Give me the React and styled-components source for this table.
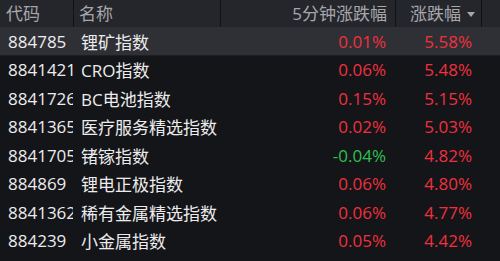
import React from "react";
import styled, { createGlobalStyle } from "styled-components";

const Global = createGlobalStyle`
  html, body { margin: 0; padding: 0; background: #141519; }
  body { font-family: "Open Sans", "Noto Sans CJK SC", sans-serif; }
`;

const Table = styled.div`
  width: 500px;
  height: 261px;
  background: #141519;
  overflow: hidden;
  font-size: 17px;
`;

const cols = "74px 147px 175px 86px 1fr";

const HeaderRow = styled.div`
  display: grid;
  grid-template-columns: ${cols};
  height: 27px;
  background: #25262b;
`;

const HeadCell = styled.div`
  display: flex;
  align-items: center;
  justify-content: ${(p) => (p.$right ? "flex-end" : "flex-start")};
  gap: 6px;
  padding: ${(p) => (p.$right ? `0 ${p.$pr || 8}px 0 0` : `0 0 0 ${p.$pl || 6}px`)};
  border-right: ${(p) => (p.$last ? "none" : "1px solid #111215")};
  color: #a6a7ab;
  line-height: 1;
  white-space: nowrap;
  overflow: hidden;
`;

const Arrow = styled.span`
  width: 0;
  height: 0;
  border-left: 4px solid transparent;
  border-right: 4px solid transparent;
  border-top: 5px solid #a6a7ab;
  margin-top: 1px;
`;

const Row = styled.div`
  display: grid;
  grid-template-columns: ${cols};
  height: 28.5px;
  align-items: center;
  background: ${(p) => (p.$active ? "#2f3035" : "transparent")};
  box-shadow: ${(p) => (p.$active ? "inset 0 -1px 0 #1d1e22" : "none")};
`;

const Code = styled.div`
  padding-left: 8px;
  color: #ececec;
  white-space: nowrap;
  overflow: hidden;
  width: 73px;
  box-sizing: border-box;
`;

const Name = styled.div`
  padding-left: 7px;
  color: #ececec;
  white-space: nowrap;
`;

const Num = styled.div`
  text-align: right;
  padding-right: 10px;
  color: ${(p) => (p.$v < 0 ? "#2fc04f" : "#f0303c")};
  white-space: nowrap;
`;

const data = [
  ["884785", "锂矿指数", 0.01, 5.58],
  ["8841421", "CRO指数", 0.06, 5.48],
  ["8841726", "BC电池指数", 0.15, 5.15],
  ["8841365", "医疗服务精选指数", 0.02, 5.03],
  ["8841705", "锗镓指数", -0.04, 4.82],
  ["884869", "锂电正极指数", 0.06, 4.8],
  ["8841362", "稀有金属精选指数", 0.06, 4.77],
  ["884239", "小金属指数", 0.05, 4.42],
];

export default function App() {
  return (
    <>
      <Global />
      <Table>
        <HeaderRow>
          <HeadCell $pl={6}>代码</HeadCell>
          <HeadCell $pl={5}>名称</HeadCell>
          <HeadCell $right $pr={8}>5分钟涨跌幅</HeadCell>
          <HeadCell $right $pr={6}>
            涨跌幅
            <Arrow />
          </HeadCell>
          <HeadCell $last />
        </HeaderRow>
        {data.map(([code, name, m5, chg], i) => (
          <Row key={code} $active={i === 0}>
            <Code>{code}</Code>
            <Name>{name}</Name>
            <Num $v={m5}>{m5.toFixed(2)}%</Num>
            <Num $v={chg}>{chg.toFixed(2)}%</Num>
            <div />
          </Row>
        ))}
      </Table>
    </>
  );
}
